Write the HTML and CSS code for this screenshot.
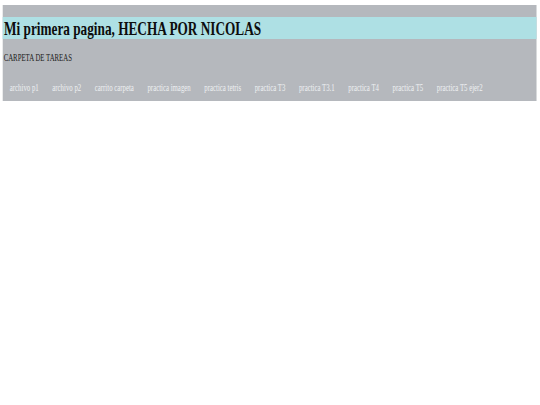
FILE: index.html
```html
<!DOCTYPE html>
<html lang="es">
<head>
<meta charset="utf-8">
<title>Mi primera pagina</title>
<link rel="stylesheet" href="styles.css">
</head>
<body>
<div class="frame">
  <div class="page">
    <div class="container">
      <h1 class="title">Mi primera pagina, HECHA POR NICOLAS</h1>
      <p class="subtitle">CARPETA DE TAREAS</p>
      <nav class="links">
        <a href="#">archivo p1</a>
        <a href="#">archivo p2</a>
        <a href="#">carrito carpeta</a>
        <a href="#">practica imagen</a>
        <a href="#">practica tetris</a>
        <a href="#">practica T3</a>
        <a href="#">practica T3.1</a>
        <a href="#">practica T4</a>
        <a href="#">practica T5</a>
        <a href="#">practica T5 ejer2</a>
      </nav>
    </div>
  </div>
</div>
</body>
</html>
```
FILE: styles.css
```css
html, body {
  margin: 0;
  padding: 0;
  background: #ffffff;
  overflow: hidden;
}

.frame {
  width: 540px;
  overflow: hidden;
}

.page {
  width: 794px;
  padding: 5px 0 0 4.4px;
  transform: scaleX(0.68);
  transform-origin: left top;
  font-family: "Liberation Serif", "Times New Roman", serif;
}

.container {
  width: 785px;
  background: #b5b8bd;
  padding-top: 12px;
}

.title {
  margin: 0;
  height: 22px;
  line-height: 23px;
  padding-left: 1.5px;
  font-size: 19.5px;
  font-weight: bold;
  color: #0d0d0d;
  background: #aee0e4;
  white-space: nowrap;
}

.subtitle {
  margin: 13px 0 0;
  padding-left: 1px;
  font-size: 10px;
  line-height: 12px;
  color: #222222;
}

.links {
  display: flex;
  margin-top: 18px;
  padding-bottom: 7px;
}

.links a {
  padding: 0 10px;
  font-size: 10px;
  line-height: 12px;
  color: #eef0f2;
  text-decoration: none;
  white-space: nowrap;
}
```
